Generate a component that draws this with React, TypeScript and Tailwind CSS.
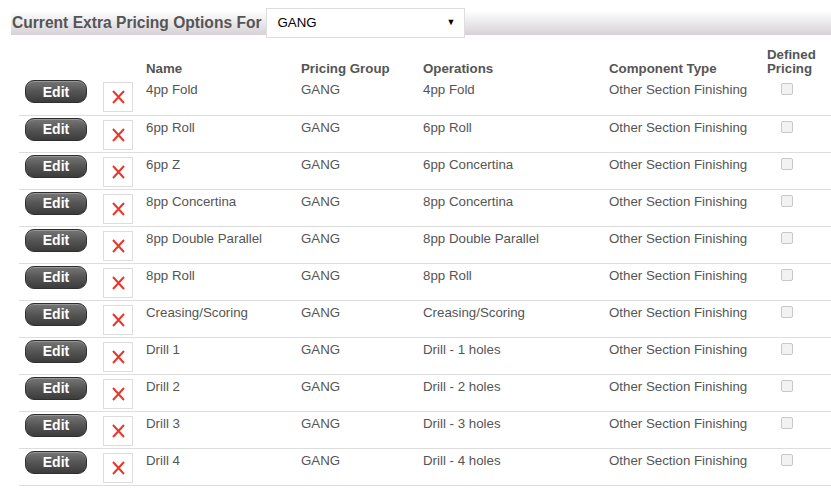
import React from "react";

const ROWS: [string, string][] = [
  ["4pp Fold", "4pp Fold"],
  ["6pp Roll", "6pp Roll"],
  ["6pp Z", "6pp Concertina"],
  ["8pp Concertina", "8pp Concertina"],
  ["8pp Double Parallel", "8pp Double Parallel"],
  ["8pp Roll", "8pp Roll"],
  ["Creasing/Scoring", "Creasing/Scoring"],
  ["Drill 1", "Drill - 1 holes"],
  ["Drill 2", "Drill - 2 holes"],
  ["Drill 3", "Drill - 3 holes"],
  ["Drill 4", "Drill - 4 holes"],
  ["Drill 5", "Drill - 5 holes"],
];

function EditButton() {
  return (
    <button className="mt-[2px] ml-[6px] flex h-[23px] w-[62px] items-center justify-center rounded-[9px] border border-[#2f2f2f] bg-gradient-to-b from-[#777] via-[#555] to-[#3c3c3c] text-[14px] font-bold leading-none text-white shadow-[inset_0_1px_0_rgba(255,255,255,0.25)]">
      Edit
    </button>
  );
}

function DeleteBox() {
  return (
    <div className="mt-[4px] flex h-[30px] w-[30px] items-center justify-center border border-[#ddd] bg-white">
      <svg width="13" height="14" viewBox="0 0 13 14">
        <path d="M1 1 L12 13 M12 1 L1 13" stroke="#e8362b" strokeWidth="2" fill="none" />
      </svg>
    </div>
  );
}

export default function App() {
  return (
    <div className="h-[488px] overflow-hidden bg-white pt-[11px] font-['Liberation_Sans',Arial,sans-serif] text-[#555]">
      {/* title bar */}
      <div className="ml-[11px] flex h-[24px] items-center bg-gradient-to-b from-white to-[#d6d1d6]">
        <h2 className="ml-[1px] text-[15.6px] font-bold leading-none text-[#555]">Current Extra Pricing Options For</h2>
        <div className="ml-[4px] flex h-[30px] w-[199px] items-center justify-between border border-[#ddd] bg-white pl-[11px] pr-[8px] text-[13.3px] text-black">
          <span>GANG</span>
          <span className="text-[9px]">▼</span>
        </div>
      </div>

      <table className="mt-[13px] ml-[19px] w-[812px] table-fixed border-collapse text-left text-[13.3px] leading-[15px]">
        <colgroup>
          <col className="w-[84px]" />
          <col className="w-[43px]" />
          <col className="w-[155px]" />
          <col className="w-[122px]" />
          <col className="w-[186px]" />
          <col className="w-[158px]" />
          <col />
        </colgroup>
        <thead>
          <tr className="align-bottom font-bold leading-[14px]">
            <th className="pb-[2px]"></th>
            <th className="pb-[2px]"></th>
            <th className="pb-[2px]">Name</th>
            <th className="pb-[2px]">Pricing Group</th>
            <th className="pb-[2px]">Operations</th>
            <th className="pb-[2px]">Component Type</th>
            <th className="pb-[2px]">
              Defined
              <br />
              Pricing
            </th>
          </tr>
        </thead>
        <tbody>
          {ROWS.map(([name, op]) => (
            <tr key={name} className="h-[37px] border-b border-[#ddd] align-top">
              <td>
                <EditButton />
              </td>
              <td>
                <DeleteBox />
              </td>
              <td className="pt-[4px]">{name}</td>
              <td className="pt-[4px]">GANG</td>
              <td className="pt-[4px]">{op}</td>
              <td className="pt-[4px]">Other Section Finishing</td>
              <td className="pt-[5px]">
                <div className="ml-[14px] h-[12px] w-[12px] rounded-[2px] border border-[#c8c8c8] bg-[#f2f2f2]" />
              </td>
            </tr>
          ))}
        </tbody>
      </table>
    </div>
  );
}
